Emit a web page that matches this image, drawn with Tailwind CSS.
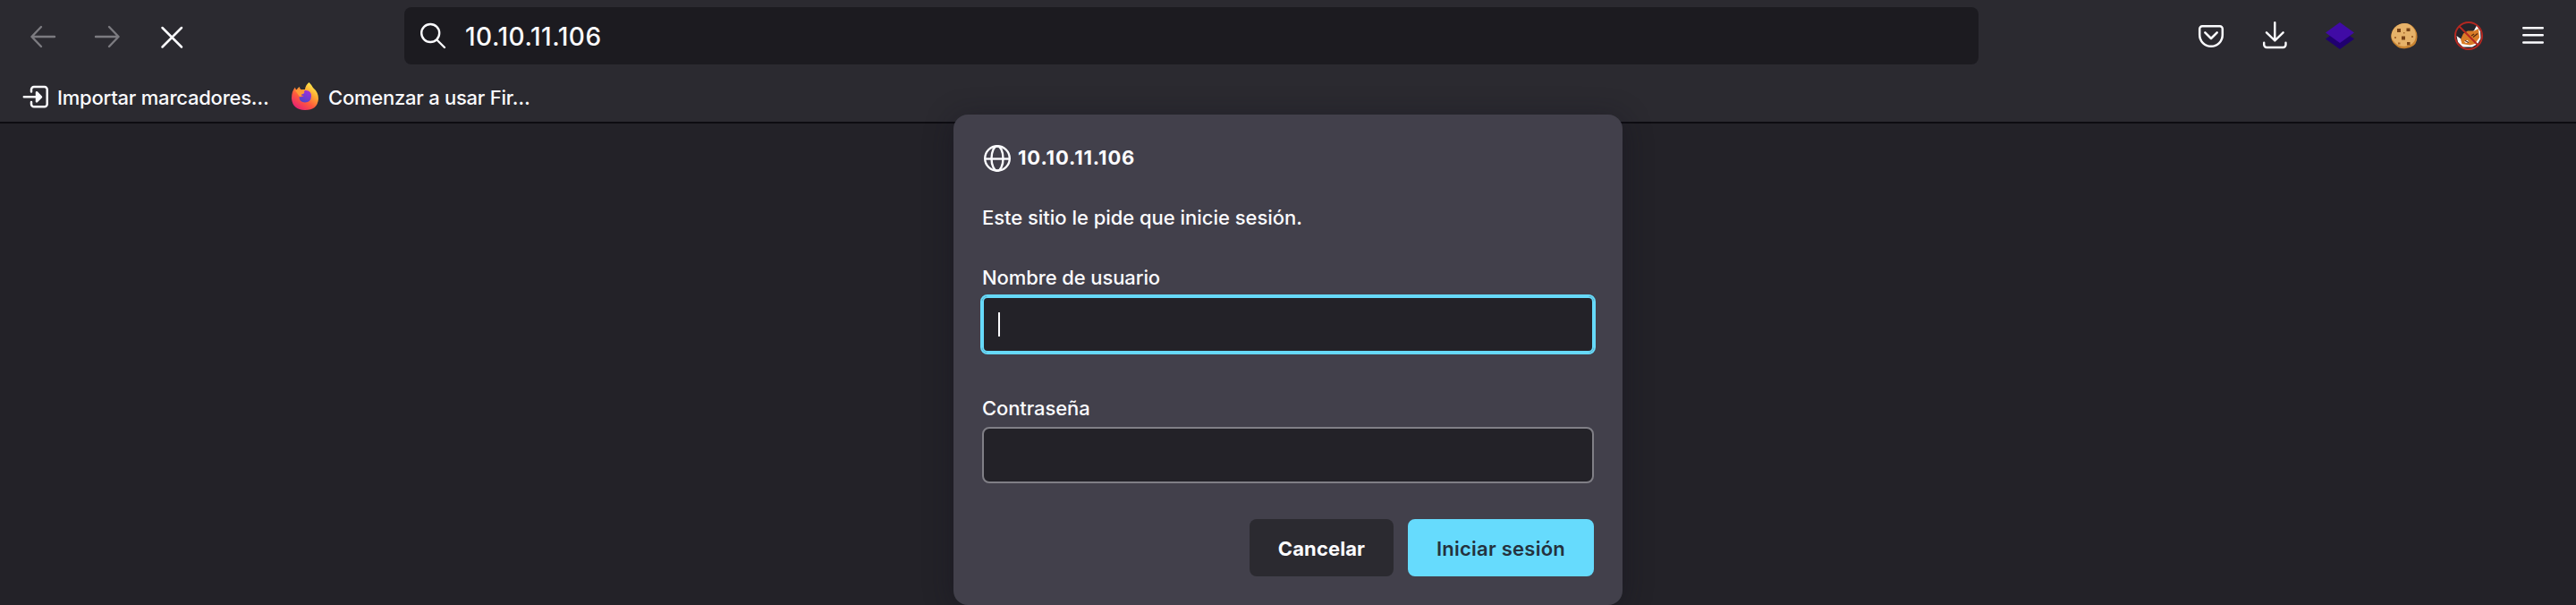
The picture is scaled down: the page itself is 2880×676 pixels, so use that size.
<!DOCTYPE html>
<html lang="es">
<head>
<meta charset="utf-8">
<title>10.10.11.106</title>
<script src="https://cdn.jsdelivr.net/npm/@tailwindcss/browser@4"></script>
</head>
<body class="relative h-[676px] overflow-hidden bg-[#232228] font-['Inter','Liberation_Sans',sans-serif] text-[22px] leading-[30px] font-medium text-[#fbfbfe]">
<header class="h-[138px] border-b-2 border-[#0d0c11] bg-[#2b2a30]">
  <!-- navigation bar -->
  <div class="flex h-20 items-center pr-8 pl-8">
    <nav class="flex w-[420px] items-center gap-10">
      <svg class="size-8 text-[#7c7b80]" viewBox="0 0 32 32" fill="none" stroke="currentColor" stroke-width="2.4" stroke-linecap="round" stroke-linejoin="round"><path d="M29 17H3.500M14 6 3.500 17 14 28"/></svg>
      <svg class="size-8 text-[#7c7b80]" viewBox="0 0 32 32" fill="none" stroke="currentColor" stroke-width="2.4" stroke-linecap="round" stroke-linejoin="round"><path d="M3 17H28.500M18 6 28.500 17 18 28"/></svg>
      <svg class="size-8" viewBox="0 0 32 32" fill="none" stroke="currentColor" stroke-width="2.5" stroke-linecap="round"><path d="M5.500 7 27 28.500M27 7 5.500 28.500"/></svg>
    </nav>
    <div class="flex h-16 w-[1760px] items-center rounded-lg bg-[#1c1b20] pl-4">
      <svg class="size-8" viewBox="0 0 32 32" fill="none" stroke="currentColor" stroke-width="2.4" stroke-linecap="round"><circle cx="13.200" cy="13" r="10"/><path d="M20.400 20.500 29 29"/></svg>
      <span class="pt-0.5 pl-5 text-[28px] leading-9 tracking-[0.5px]">10.10.11.106</span>
    </div>
    <div class="ml-auto flex items-center gap-10">
      <svg class="size-8" viewBox="0 0 32 32" fill="none" stroke="currentColor" stroke-width="2.500" stroke-linecap="round" stroke-linejoin="round"><path d="M6.200 5.200H25.800A3 3 0 0 1 28.800 8.200V15A12.800 12.800 0 0 1 3.200 15V8.200A3 3 0 0 1 6.200 5.200Z"/><path d="M9.300 12.300 16 19 22.700 12.300"/></svg>
      <svg class="size-8" viewBox="0 0 32 32" fill="none" stroke="currentColor" stroke-width="2.400" stroke-linecap="round" stroke-linejoin="round"><path d="M15.300 1.200V21M6 12.300 15.300 21.400 24.600 12.300M3.200 23.800V26A3 3 0 0 0 6.200 29H24.500A3 3 0 0 0 27.500 26V23.800"/></svg>
      <svg class="size-8" viewBox="0 0 32 32"><path d="M0 19.500 16 8 32 19.500 16 31Z" fill="#200070"/><path d="M0 12.500 16 1 32 12.500 16 24Z" fill="#400ba5"/></svg>
      <svg class="size-8" viewBox="0 0 32 32"><path d="M11 3Q20 0 26 6Q32 12 30 21Q28 29 18 30Q11 31 7 27Q0 22 1.500 14Q3 6 11 3Z" fill="#c98431"/><path d="M11 3Q20 0 25 6Q30 11 28.500 19Q27 26 18 27.500Q10 28.500 6 24Q0 19 2 13Q4 6 11 3Z" fill="#e6b269"/><g fill="#774216"><path d="M8 8h4v4H8zM18.500 7.500h4v3.500h-4zM13 16.500h4v4h-4zM19 23h3.500v3.500H19z"/><path d="M5 17h2v2H5zM24 16h2v2h-2zM9 23.500h2.500v2H9zM15 12h1.500v1.500H15z" fill="#a8692d"/></g></svg>
      <svg class="size-8" viewBox="0 0 32 32"><circle cx="16" cy="16" r="14" fill="#25242a"/><path d="M2.500 16 8 20 22 10 25 4.500 29 11 29.500 19 26 25 20 28.500H9.500L4 23Z" fill="#fff"/><path d="M7 20 10 13.500 15 10.500 22 10.500 27 8 28 18 23 25 17.500 26.500 8.500 25Z" fill="#d97c27"/><path d="M11 22.500 14.500 20.800 16.500 23 13 24Z" fill="#fff"/><path d="M12 21.500 16 23.500M21 17.500 26 13.500M19 16 22 14" stroke="#54290f" stroke-width="1.200"/><circle cx="16" cy="16" r="15" fill="none" stroke="#b52821" stroke-width="2"/><path d="M5.500 5.500 26.500 26.500" stroke="#b52821" stroke-width="2"/></svg>
      <svg class="size-8" viewBox="0 0 32 32" stroke="currentColor" stroke-width="2.400" stroke-linecap="round"><path d="M5.200 7.300H26.800M5.200 15.300H26.800M5.200 23.500H26.800"/></svg>
    </div>
  </div>
  <!-- bookmarks bar -->
  <div class="flex h-14 items-center pl-6">
    <svg class="size-8" viewBox="0 0 32 32" fill="none" stroke="currentColor" stroke-width="2.500" stroke-linecap="round" stroke-linejoin="round"><path d="M2.800 16.300H16M11 10.500V8A3 3 0 0 1 14 5H25.700A3 3 0 0 1 28.700 8V24.300A3 3 0 0 1 25.700 27.300H14A3 3 0 0 1 11 24.300V22"/><path d="M17 11.200 22 16.300 17 21.400Z" fill="currentColor"/></svg>
    <span class="w-[269px] pt-0.5 pl-2 tracking-[-0.22px] whitespace-nowrap">Importar marcadores…</span>
    <svg class="size-8" viewBox="0 0 32 32">
      <defs>
        <linearGradient id="flame" x1=".85" y1=".08" x2=".25" y2=".95"><stop offset="0" stop-color="#fff04e"/><stop offset=".35" stop-color="#ffa632"/><stop offset=".65" stop-color="#ff5a3d"/><stop offset="1" stop-color="#e8256f"/></linearGradient>
        <linearGradient id="globe" x1=".8" y1="0" x2=".3" y2="1"><stop offset="0" stop-color="#a42fdc"/><stop offset="1" stop-color="#4b46c8"/></linearGradient>
      </defs>
      <path d="M20.500 0Q23.500 3 25 6Q31 11 31 18.500Q30 31 16 31Q2 30.500 1 18Q1 10 5 5.500Q5 7.500 6.500 8.500Q8 5.500 10 5Q9.800 7 11.500 8H16Q16.500 3 20.500 0Z" fill="url(#flame)"/>
      <path d="M15.500 9Q23 8 23 15.500Q22.500 22.500 16 22.500Q9.500 22 9.500 16Q12 17 14.500 15Q11 15 11 12.500L15 11Z" fill="url(#globe)"/>
      <path d="M5 9Q9 7 11.500 9.500L15.500 11Q15 13 12 13.500Q12.500 15.500 10 16Z" fill="#ff9a35"/>
    </svg>
    <span class="pt-0.5 pl-2.5 tracking-[-0.24px] whitespace-nowrap">Comenzar a usar Fir…</span>
  </div>
</header>

<!-- sign-in dialog, over the browser window -->
<form class="absolute top-32 left-[1066px] flex h-[548px] w-[748px] flex-col rounded-2xl bg-[#42404b] px-8 pt-[33px] shadow-[0_4px_32px_rgba(20,18,32,0.45)]">
  <div class="flex h-8 items-center">
    <svg class="size-8" viewBox="0 0 32 32" fill="none" stroke="currentColor" stroke-width="2.400"><circle cx="17" cy="16" r="13.800"/><ellipse cx="17" cy="16" rx="6.500" ry="13.800"/><path d="M3.200 16.500H30.800"/></svg>
    <span class="-mt-0.5 pl-2 font-bold tracking-[0.85px]">10.10.11.106</span>
  </div>
  <p class="mt-[35px] tracking-[-0.03px]">Este sitio le pide que inicie sesión.</p>
  <label class="mt-[37px] tracking-[-0.1px]" for="user">Nombre de usuario</label>
  <div id="user" class="mt-1.5 flex h-[63px] items-center rounded-md border-2 border-[#66d9f9] bg-[#232228] pl-4 outline-2 outline-[#66d9f9]"><span class="h-[27px] w-0.5 bg-[#fbfbfe]"></span></div>
  <label class="mt-[47px] tracking-[-0.1px]" for="pass">Contraseña</label>
  <div id="pass" class="mt-1.5 h-[63px] rounded-lg border-2 border-[#807f86] bg-[#232228]"></div>
  <div class="mt-10 flex justify-end gap-4">
    <button type="button" class="h-16 w-[161px] rounded-lg bg-[#2b2a30] pt-0.5 font-bold tracking-[0.1px]">Cancelar</button>
    <button type="button" class="h-16 w-[208px] rounded-lg bg-[#66dbfd] pt-0.5 font-semibold tracking-[0.25px] text-[#24323e]">Iniciar sesión</button>
  </div>
</form>
</body>
</html>
